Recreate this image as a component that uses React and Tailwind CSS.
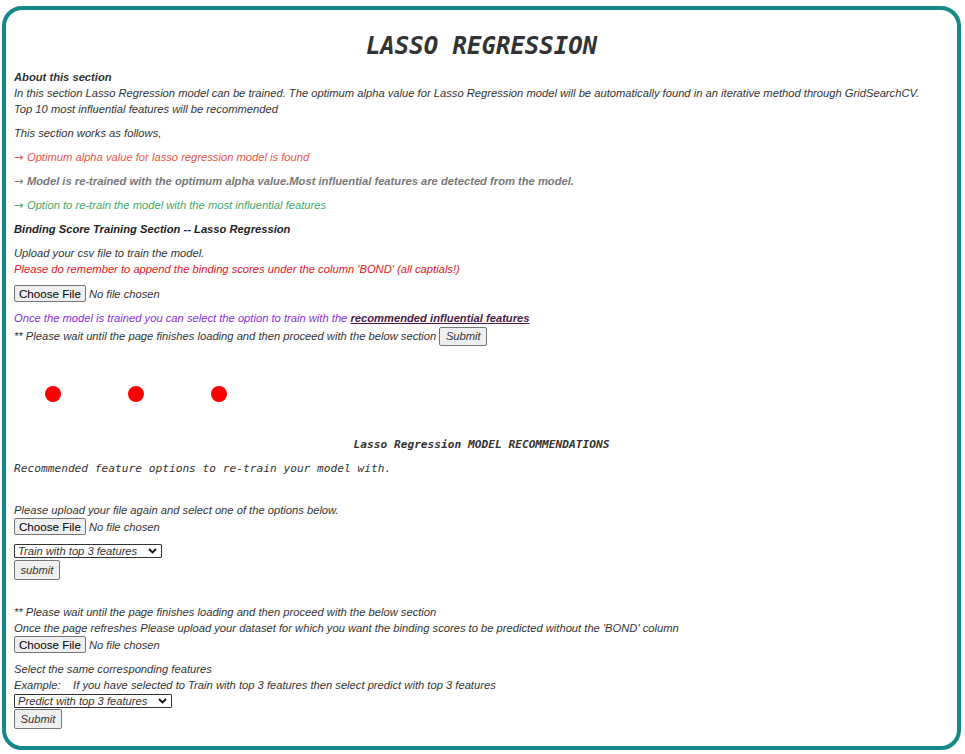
import React from 'react';

const font = "font-['Liberation_Sans',Arial,sans-serif] italic text-[11.2px] leading-[16px]";
const body = `${font} text-[#333]`;
const mono = "font-['DejaVu_Sans_Mono','Liberation_Mono',monospace] italic";

function Arrow() {
  return <span className="font-['DejaVu_Sans',sans-serif] not-italic font-normal leading-none align-baseline">→ </span>;
}

function FileInput({ className = '' }) {
  return (
    <div className={`flex items-center h-[17px] ${className}`}>
      <span className="h-[17px] px-[4px] flex items-center bg-[#efefef] border border-[#767676] rounded-[2px] not-italic text-[11.6px] text-black font-['Liberation_Sans',Arial,sans-serif]">
        Choose File
      </span>
      <span className={`${body} ml-[3px]`}>No file chosen</span>
    </div>
  );
}

function Btn({ children, className = '' }) {
  return (
    <span className={`flex items-center justify-center px-[5px] bg-[#efefef] border border-[#767676] rounded-[2px] ${body} ${className}`}>
      {children}
    </span>
  );
}

function FakeSelect({ label, width }) {
  return (
    <div className={`flex items-center justify-between h-[14px] ${width} border border-[#333] rounded-[1px] pl-[3px] pr-[4px] ${font} leading-[12px] text-[#333]`}>
      <span>{label}</span>
      <svg width="9" height="6" viewBox="0 0 9 6">
        <path d="M1 1l3.5 3.5L8 1" fill="none" stroke="#111" strokeWidth="1.8" />
      </svg>
    </div>
  );
}

export default function App() {
  return (
    <div className="pt-[6px] pl-[2px]">
      <div className="w-[959px] h-[744px] border-4 border-[#14898a] rounded-[20px] px-2 flex flex-col items-start">
        <h1 className={`${mono} self-stretch font-bold text-[24px] leading-[28px] text-[#333] text-center mt-[22px]`}>
          LASSO REGRESSION
        </h1>

        <div className={`${body} mt-[9px]`}>
          <div className="font-bold">About this section</div>
          <div>
            In this section Lasso Regression model can be trained. The optimum alpha value for Lasso Regression model will be automatically found in an iterative method through GridSearchCV.
          </div>
          <div>Top 10 most influential features will be recommended</div>
        </div>

        <div className={`${body} mt-2`}>This section works as follows,</div>
        <div className={`${font} h-4 mt-2 text-[#e8534a]`}><Arrow />Optimum alpha value for lasso regression model is found</div>
        <div className={`${font} h-4 mt-2 font-bold text-[#777]`}>
          <Arrow />Model is re-trained with the optimum alpha value.Most influential features are detected from the model.
        </div>
        <div className={`${font} h-4 mt-2 text-[#43a868]`}><Arrow />Option to re-train the model with the most influential features</div>
        <div className={`${font} mt-2 font-bold text-[#222]`}>Binding Score Training Section -- Lasso Regression</div>

        <div className={`${body} mt-2`}>Upload your csv file to train the model.</div>
        <div className={`${font} text-[#e8141c]`}>
          Please do remember to append the binding scores under the column 'BOND' (all captials!)
        </div>

        <FileInput className="mt-2" />

        <div className={`${font} mt-2 text-[#8a2be2]`}>
          Once the model is trained you can select the option to train with the{' '}
          <span className="font-bold underline text-[#4a1a45]">recommended influential features</span>
        </div>
        <div className={`${body} flex items-center h-[20px]`}>
          <span>** Please wait until the page finishes loading and then proceed with the below section</span>
          <Btn className="ml-[3px] h-[19px] w-[48px]">Submit</Btn>
        </div>

        <div className="flex mt-[40px] pl-[31px] gap-[67px]">
          <span className="w-4 h-4 rounded-full bg-[#f00]" />
          <span className="w-4 h-4 rounded-full bg-[#f00]" />
          <span className="w-4 h-4 rounded-full bg-[#f00]" />
        </div>

        <div className={`${mono} self-stretch font-bold text-[11.2px] leading-[16px] text-[#333] text-center mt-[35px]`}>
          Lasso Regression MODEL RECOMMENDATIONS
        </div>
        <div className={`${mono} text-[11.2px] leading-[16px] text-[#333] mt-2`}>
          Recommended feature options to re-train your model with.
        </div>

        <div className={`${body} mt-[25px]`}>Please upload your file again and select one of the options below.</div>
        <FileInput />
        <div className="flex mt-[9px]">
          <FakeSelect label="Train with top 3 features" width="w-[148px]" />
        </div>
        <div className="flex mt-[2px]">
          <Btn className="h-[20px] w-[46px]">submit</Btn>
        </div>

        <div className={`${body} mt-[24px]`}>** Please wait until the page finishes loading and then proceed with the below section</div>
        <div className={body}>
          Once the page refreshes Please upload your dataset for which you want the binding scores to be predicted without the 'BOND' column
        </div>
        <FileInput />

        <div className={`${body} mt-2`}>Select the same corresponding features</div>
        <div className={`${body} whitespace-pre`}>Example:    If you have selected to Train with top 3 features then select predict with top 3 features</div>
        <div className="flex mt-[1px]">
          <FakeSelect label="Predict with top 3 features" width="w-[158px]" />
        </div>
        <div className="flex mt-[1px]">
          <Btn className="h-[20px] w-[48px]">Submit</Btn>
        </div>
      </div>
    </div>
  );
}
